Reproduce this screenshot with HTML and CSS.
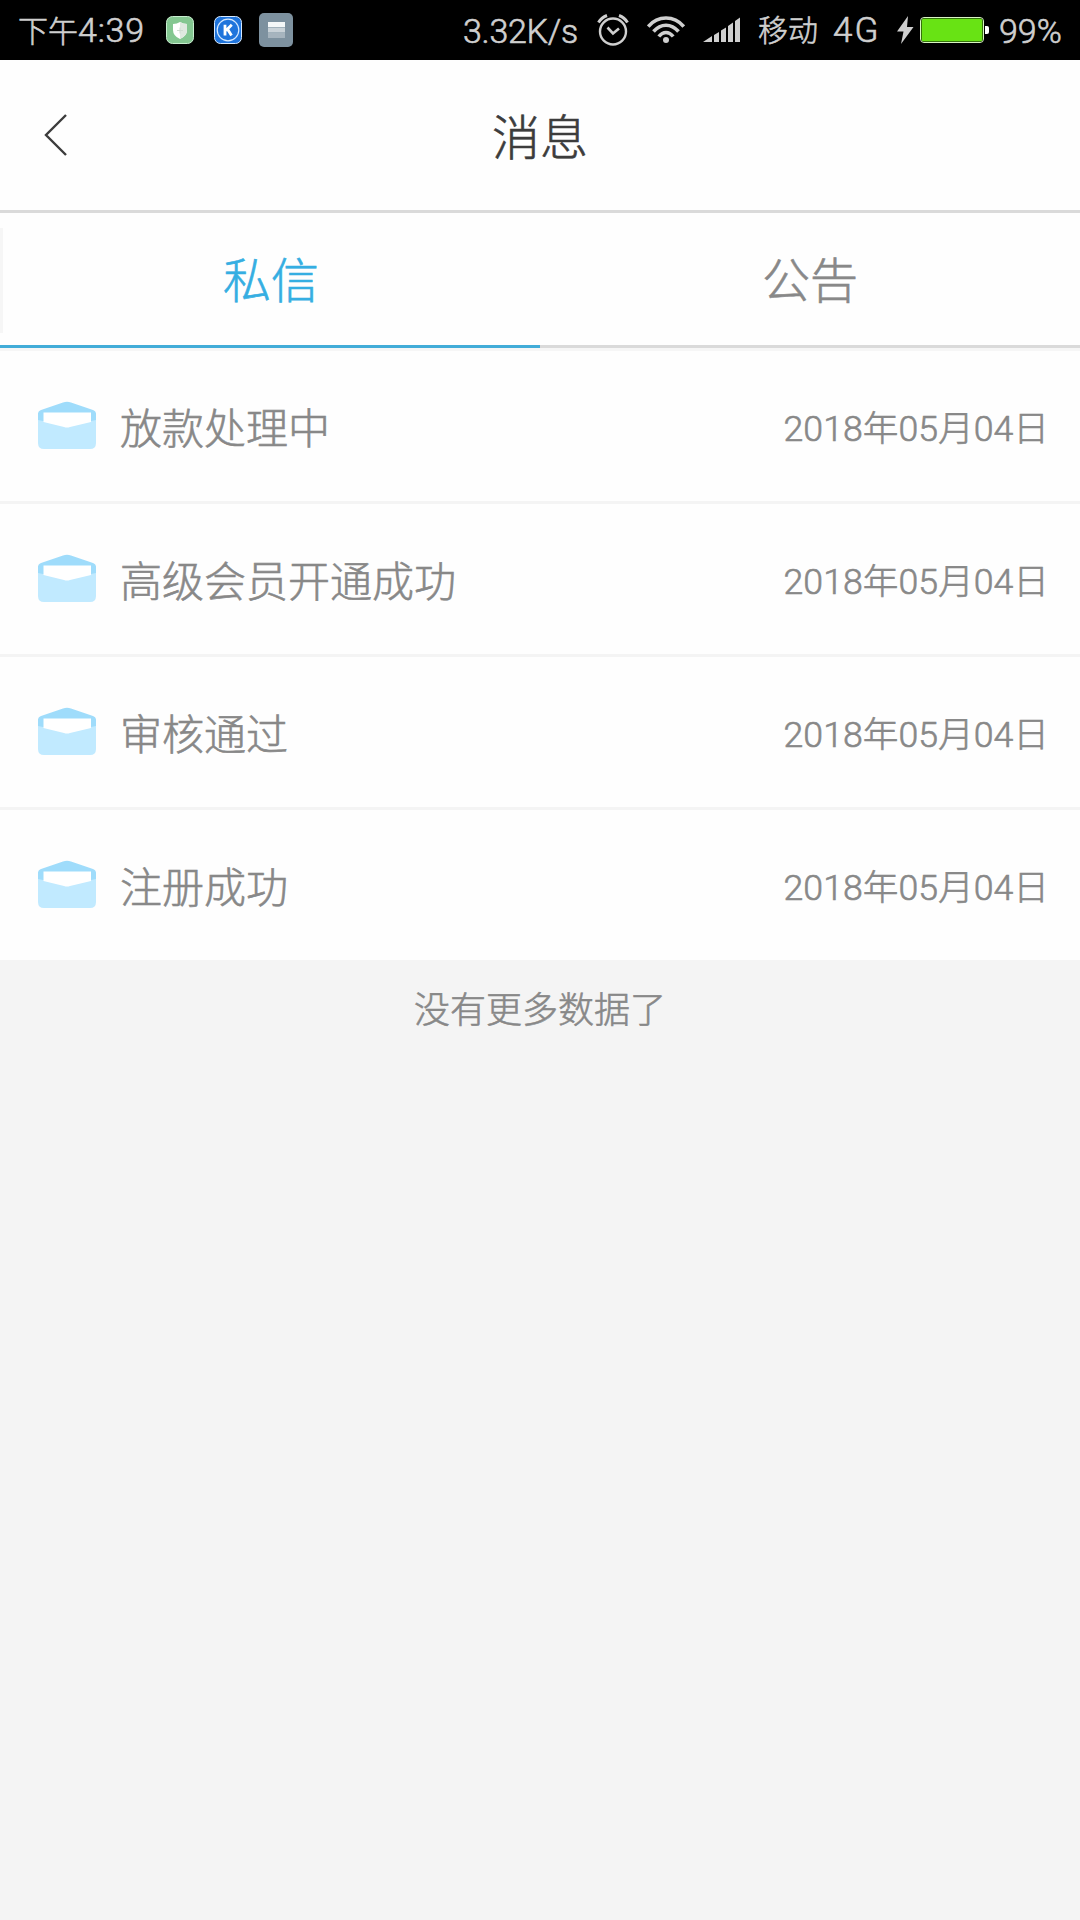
FILE: index.html
```html
<!DOCTYPE html>
<html lang="zh-CN">
<head>
    <meta charset="UTF-8">
    <meta name="viewport" content="width=device-width, initial-scale=1.0">
    <title>消息</title>
    <link rel="stylesheet" href="styles.css">
</head>
<body>
<svg class="defs" width="0" height="0">
    <symbol id="envelope" viewBox="0 0 60 50">
        <path fill="#c1eaff" d="M1 12h58v30q0 6-6 6H7q-6 0-6-6z"/>
        <path fill="#9fdcfb" d="M1 19v-6q0-3 3-4L26 1.500q4-1.300 8 0L56 9q3 1 3 4v6l-5 1H6z"/>
        <path fill="#fff" d="M6.500 11.500h47.500V21L33 26q-3 1-6 0L6.500 21z"/>
    </symbol>
</svg>

<div class="statusbar">
    <div class="status-left">
        <span class="time"><span class="cn">下午</span>4:39</span>
        <svg class="app-icon" width="28" height="28" viewBox="0 0 28 28">
            <rect x="0.500" y="0.500" width="27" height="27" rx="6" fill="#84c791" stroke="#c9efd0"/>
            <path fill="#fff" d="M14 6q3 2 7 2v6q0 6-7 9-7-3-7-9V8q4 0 7-2z"/>
            <path fill="#dfe9e0" d="M14 6q3 2 7 2v6q0 6-7 9z"/>
            <path stroke="#cfdcd1" d="M11 14.500h6M14 11.500v6"/>
        </svg>
        <svg class="app-icon" width="28" height="28" viewBox="0 0 28 28">
            <rect x="0.500" y="0.500" width="27" height="27" rx="6" fill="#1f74dc" stroke="#d6e9ff"/>
            <circle cx="14" cy="14" r="10.800" fill="none" stroke="#d6e9ff" stroke-width="1.200"/>
            <path fill="none" stroke="#fff" stroke-width="2.800" d="M11 8.800v10.700M17.800 8.800L12 14.500M13.500 13l4 6.500"/>
        </svg>
        <svg width="34" height="34" viewBox="0 0 34 34">
            <rect width="34" height="34" rx="5" fill="#7d919f"/>
            <path fill="#f4f7f8" d="M9 9h17v5H9z"/>
            <path fill="#c9d2d8" d="M9 14.500h17v5H9z"/>
            <path fill="#a6b4be" d="M9 20h17v5H9z"/>
        </svg>
    </div>
    <div class="status-right">
        <span class="speed">3.32K/s</span>
        <svg class="alarm" width="32" height="32" viewBox="0 0 32 32" fill="none" stroke="#cfcfcf">
            <circle cx="16" cy="17.500" r="13" stroke-width="2.400"/>
            <path stroke-width="2.600" d="M10.500 13.500l5.500 6 6-5"/>
            <path stroke-width="3" d="M1.500 8.500q3-5 8.500-7M30.500 8.500q-3-5-8.500-7"/>
        </svg>
        <svg class="wifi" width="38" height="28" viewBox="0 0 38 28" fill="none" stroke="#cfcfcf" stroke-width="3.600">
            <path d="M1.200 10.500Q8.500 2 19 2t17.800 8.500M6.500 15.500Q12 9.200 19 9.200t12.500 6.300M11.800 20.500q3.200-4 7.200-4t7.200 4"/>
            <circle cx="19" cy="24" r="3" fill="#cfcfcf" stroke="none"/>
        </svg>
        <svg class="signal" width="38" height="26" viewBox="0 0 38 26" fill="#cfcfcf">
            <path d="M0 25l9-6v6zM11 18l5-3v10h-5zM18 13.500l5-3V25h-5zM25 9l5-3.500V25h-5zM32 4l5-3.500V25h-5z"/>
        </svg>
        <span class="cn carrier">移动</span>
        <span class="network">4G</span>
        <svg class="bolt" width="18" height="30" viewBox="0 0 18 30">
            <path fill="#cfcfcf" d="M12 1L1 16.500h6.500L5 29 17.500 12H11z"/>
        </svg>
        <svg class="battery" width="70" height="26" viewBox="0 0 70 26">
            <rect x="0.500" y="0.500" width="63" height="25" rx="3.500" fill="#000" stroke="#d8f5c2"/>
            <rect x="1.500" y="1.500" width="61" height="23" rx="2.500" fill="#68e314"/>
            <path fill="#fff" d="M65 9h2q2 0 2 2v4q0 2-2 2h-2z"/>
        </svg>
        <span class="percent">99%</span>
    </div>
</div>

<div class="header">
    <svg class="back" width="24" height="42" viewBox="0 0 24 42">
        <path fill="none" stroke="#3c3c3c" stroke-width="2.400" d="M22 1L2 21l20 20"/>
    </svg>
    <h1 class="title">消息</h1>
</div>

<div class="tabs">
    <div class="tab active">私信</div>
    <div class="tab">公告</div>
</div>

<ul class="messages">
    <li class="message">
        <svg class="mail" width="60" height="50"><use href="#envelope"/></svg>
        <span class="subject">放款处理中</span>
        <span class="date">2018年05月04日</span>
    </li>
    <li class="message">
        <svg class="mail" width="60" height="50"><use href="#envelope"/></svg>
        <span class="subject">高级会员开通成功</span>
        <span class="date">2018年05月04日</span>
    </li>
    <li class="message">
        <svg class="mail" width="60" height="50"><use href="#envelope"/></svg>
        <span class="subject">审核通过</span>
        <span class="date">2018年05月04日</span>
    </li>
    <li class="message">
        <svg class="mail" width="60" height="50"><use href="#envelope"/></svg>
        <span class="subject">注册成功</span>
        <span class="date">2018年05月04日</span>
    </li>
</ul>
<p class="nomore">没有更多数据了</p>
</body>
</html>
```
FILE: styles.css
```css
* {
    box-sizing: border-box;
}
body {
    margin: 0;
    min-height: 1920px;
    background-color: #f4f4f4;
    font-family: Roboto, "Noto Sans CJK SC", sans-serif;
    font-weight: 300;
    -webkit-text-stroke: 0.6px;
    color: #888;
}
svg {
    display: block;
    flex: none;
}
.defs {
    position: absolute;
}

/* status bar */
.statusbar {
    display: flex;
    justify-content: space-between;
    height: 60px;
    padding: 2px 18px 0 18px;
    background-color: #000;
    color: #cfcfcf;
    font-size: 34px;
    line-height: 58px;
    white-space: nowrap;
}
.status-left,
.status-right {
    display: flex;
    align-items: center;
    height: 56px;
}
.status-left span,
.status-right span {
    padding-top: 1px;
}
.time {
    width: 148px;
    letter-spacing: 0.8px;
}
.cn {
    font-size: 30px;
    letter-spacing: 0;
}
.app-icon {
    margin-right: 20px;
}
.app-icon + .app-icon {
    margin-right: 17px;
}
.speed {
    width: 116px;
    margin-right: 18px;
    letter-spacing: -0.3px;
}
.alarm {
    margin-right: 18px;
}
.wifi {
    margin-right: 18px;
}
.signal {
    margin-right: 17px;
}
.carrier {
    margin-right: 15px;
}
.network {
    width: 46px;
    margin-right: 17px;
    font-size: 35px;
    letter-spacing: 2px;
}
.bolt {
    margin-right: 6px;
}
.battery {
    margin-right: 9px;
}
.percent {
    width: 63px;
}

/* page header */
.header {
    display: grid;
    grid-template-columns: 100px 1fr 100px;
    align-items: center;
    height: 153px;
    border-bottom: 3px solid #dadada;
    background-color: #fefefe;
}
.back {
    margin-left: 44px;
}
.title {
    margin: 0 0 3px;
    text-align: center;
    font-size: 48px;
    font-weight: 300;
    color: #3c3c3c;
}

/* tabs */
.tabs {
    display: flex;
    height: 138px;
    border-bottom: 3px solid #f6f6f6;
    background: linear-gradient(#f6f6f6, #f6f6f6) 0 15px / 3px 105px no-repeat #fefefe;
}
.tab {
    flex: 1;
    border-bottom: 3px solid #dadada;
    text-align: center;
    font-size: 48px;
    line-height: 138px;
}
.tab.active {
    border-color: #42acd8;
    color: #35aee2;
    text-indent: 2px;
}

/* message list */
.messages {
    margin: 0;
    padding: 0;
    list-style: none;
}
.message {
    display: flex;
    align-items: center;
    height: 153px;
    padding: 0 31px 0 37px;
    border-bottom: 3px solid #f4f4f4;
    background-color: #fefefe;
}
.subject {
    flex: 1;
    margin: 0 0 2px 23px;
    font-size: 42px;
}
.date {
    margin-bottom: 2px;
    font-size: 35.700px;
}
.nomore {
    margin: 0;
    text-align: center;
    font-size: 36px;
    line-height: 96px;
}
```
